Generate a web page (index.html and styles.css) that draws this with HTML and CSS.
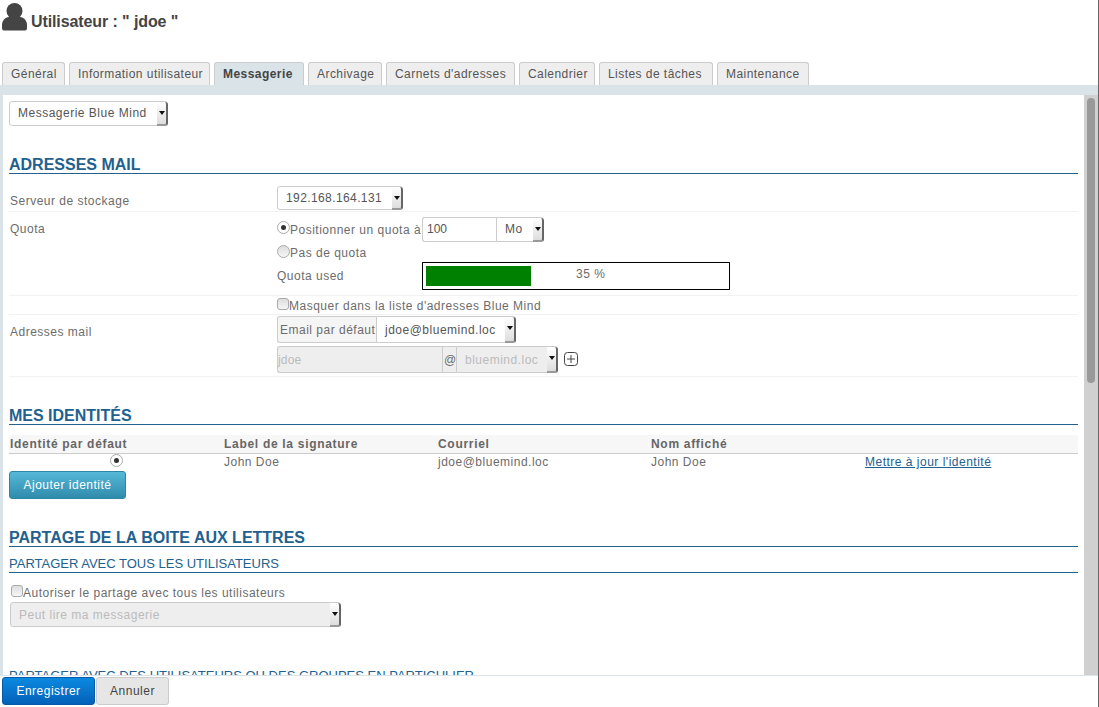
FILE: index.html
```html
<!DOCTYPE html>
<html lang="fr">
<head>
  <meta charset="UTF-8">
  <title>Utilisateur : jdoe</title>
  <link rel="stylesheet" href="styles.css">
</head>
<body>

  <!-- Title -->
  <header class="page-head">
    <svg class="user-icon" width="28" height="31" viewBox="0 0 28 31"><circle cx="12.500" cy="9" r="8" fill="#444"/><path d="M0 23c0-4 3-8 7-8h11c4 0 7 4 7 8v3c0 2-1 2.500-3 2.500H3c-2 0-3-.5-3-2.500z" fill="#444"/></svg>
    <h1>Utilisateur : " jdoe "</h1>
  </header>

  <!-- Tabs -->
  <ul class="tabs">
    <li>Général</li>
    <li>Information utilisateur</li>
    <li class="active">Messagerie</li>
    <li>Archivage</li>
    <li>Carnets d'adresses</li>
    <li>Calendrier</li>
    <li>Listes de tâches</li>
    <li>Maintenance</li>
  </ul>

  <div class="panel">
    <main class="content">
      <div class="select sel-type"><span class="sel-text">Messagerie Blue Mind</span><span class="arrow"></span></div>

      <h2 class="first">ADRESSES MAIL</h2>
      <div class="row row-server">
        <label class="row-label">Serveur de stockage</label>
        <div><div class="select sel-server"><span class="sel-text">192.168.164.131</span><span class="arrow"></span></div></div>
      </div>
      <div class="row row-quota">
        <label class="row-label">Quota</label>
        <div>
          <div class="line line-quota">
            <span class="radio checked"></span><span class="quota-text">Positionner un quota à</span>
            <div class="group group-quota">
              <span class="input input-quota">100</span>
              <div class="select sel-unit"><span class="sel-text">Mo</span><span class="arrow"></span></div>
            </div>
          </div>
          <div class="line line-none"><span class="radio"></span><span>Pas de quota</span></div>
          <div class="line line-used">
            <span class="used-label">Quota used</span>
            <div class="progress"><div class="progress-bar" style="width: 105px"></div><span class="progress-text">35 %</span></div>
          </div>
        </div>
      </div>
      <div class="row row-hide">
        <span class="row-label"></span>
        <div class="line"><span class="check"></span><span>Masquer dans la liste d'adresses Blue Mind</span></div>
      </div>
      <div class="row row-mail">
        <label class="row-label">Adresses mail</label>
        <div>
          <div class="group group-default">
            <span class="addon addon-default">Email par défaut</span>
            <div class="select sel-default"><span class="sel-text">jdoe@bluemind.loc</span><span class="arrow"></span></div>
          </div>
          <div class="line-add">
            <div class="group group-add">
              <span class="input input-login">jdoe</span>
              <span class="addon addon-at">@</span>
              <div class="select sel-domain"><span class="sel-text">bluemind.loc</span><span class="arrow"></span></div>
            </div>
            <svg class="plus" width="14" height="14" viewBox="0 0 14 14"><rect x=".5" y=".5" width="13" height="13" rx="3" fill="none" stroke="#444"/><path d="M3 7h8M7 3v8" stroke="#444" fill="none"/></svg>
          </div>
        </div>
      </div>

      <h2 class="identities">MES IDENTITÉS</h2>
      <table class="id-table">
        <thead>
          <tr><th>Identité par défaut</th><th>Label de la signature</th><th>Courriel</th><th>Nom affiché</th><th></th></tr>
        </thead>
        <tbody>
          <tr>
            <td class="cell-radio"><span class="radio checked"></span></td>
            <td>John Doe</td>
            <td>jdoe@bluemind.loc</td>
            <td>John Doe</td>
            <td><a href="#">Mettre à jour l'identité</a></td>
          </tr>
        </tbody>
      </table>
      <button class="btn btn-info">Ajouter identité</button>

      <h2 class="sharing">PARTAGE DE LA BOITE AUX LETTRES</h2>
      <h3>PARTAGER AVEC TOUS LES UTILISATEURS</h3>
      <div class="line line-share"><span class="check"></span><span>Autoriser le partage avec tous les utilisateurs</span></div>
      <div class="select sel-share"><span class="sel-text">Peut lire ma messagerie</span><span class="arrow"></span></div>
      <h3 class="share-some">PARTAGER AVEC DES UTILISATEURS OU DES GROUPES EN PARTICULIER</h3>
    </main>

    <!-- Scrollbar -->
    <div class="scrollbar"><div class="thumb"></div></div>
  </div>

  <!-- Actions -->
  <footer class="actions">
    <button class="btn btn-primary">Enregistrer</button>
    <button class="btn btn-cancel">Annuler</button>
  </footer>

</body>
</html>
```

FILE: styles.css
```css
* { box-sizing: border-box; }
html, body { height: 100%; }
body { display: flex; flex-direction: column; height: 707px; margin: 0; overflow: hidden; background-color: #fff; border-right: 1px solid #666; font-family: "Liberation Sans", Arial, sans-serif; font-size: 12px; letter-spacing: 0.5px; color: #6c6c6c; }

.page-head { display: flex; align-items: flex-start; height: 62px; padding: 2px 0 0 2px; flex: none; }
.user-icon { display: block; }
.page-head h1 { margin: 11px 0 0 1px; font-size: 16px; line-height: 18px; letter-spacing: -0.1px; font-weight: bold; color: #444; }

.tabs { display: flex; gap: 4px; height: 23px; flex: none; list-style: none; margin: 0; padding: 0 0 0 2px; letter-spacing: 0.45px; }
.tabs li { height: 23px; padding-left: 8px; line-height: 22px; white-space: nowrap; background-color: #eee; border: 1px solid #ccc; border-bottom: none; border-radius: 3px 3px 0 0; color: #555; }
.tabs li.active { background-color: #dae3e8; font-weight: bold; color: #444; }
.tabs li:nth-child(1) { width: 63px; }
.tabs li:nth-child(2) { width: 141px; }
.tabs li:nth-child(3) { width: 90px; }
.tabs li:nth-child(4) { width: 74px; }
.tabs li:nth-child(5) { width: 129px; }
.tabs li:nth-child(6) { width: 76px; }
.tabs li:nth-child(7) { width: 114px; }
.tabs li:nth-child(8) { width: 92px; }

.panel { display: flex; flex: 1; min-height: 0; border-top: 10px solid #dae3e8; border-left: 3px solid #dae3e8; }
.content { flex: 1; min-width: 0; overflow: hidden; padding: 6px 6px 0 6px; }
.scrollbar { width: 14px; flex: none; padding: 3px 3px 0; background-color: #d0d0d0; }
.thumb { height: 285px; background-color: #999; border-radius: 4px; }

h2 { margin: 0; height: 20px; font-size: 16px; line-height: 21px; letter-spacing: 0; color: #22618f; border-bottom: 1px solid #22618f; }
h2.first { margin-top: 28px; }
h2.identities { margin-top: 28px; }
h2.sharing { margin-top: 28px; }
h3 { margin: 8px 0 0; height: 18px; font-size: 13px; font-weight: normal; line-height: 17px; letter-spacing: 0; color: #22618f; border-bottom: 1px solid #22618f; }

.row { display: flex; border-bottom: 1px solid #f2f2f2; }
.row-label { width: 268px; flex: none; padding-left: 1px; }
.row-server { height: 38px; padding-top: 12px; }
.row-server .row-label { padding-top: 8px; }
.row-quota { height: 84px; }
.row-quota .row-label { padding-top: 10px; }
.row-hide { height: 19px; }
.row-mail { height: 62px; padding-top: 1px; }
.row-mail .row-label { padding-top: 9px; }

.line { display: flex; align-items: center; }
.line-quota { height: 30px; padding-top: 5px; }
.quota-text { width: 132px; white-space: nowrap; }
.line-none { height: 20px; padding-top: 2px; }
.line-used { height: 28px; }
.used-label { width: 145px; }
.row-hide .line { height: 18px; padding-top: 2px; }

.progress { display: flex; align-items: flex-start; width: 308px; height: 28px; padding: 3px; border: 1px solid #000; }
.progress-bar { height: 20px; flex: none; background-color: #008000; }
.progress-text { margin: 1px 0 0 45px; }

.radio { display: inline-block; flex: none; position: relative; width: 13px; height: 13px; margin-top: -4px; background: linear-gradient(#ddd, #f6f6f6); border: 1px solid #aaa; border-radius: 50%; }
.radio.checked { background: #fff; }
.radio.checked::after { content: ""; position: absolute; left: 3px; top: 3px; width: 5px; height: 5px; background-color: #333; border-radius: 50%; }
.check { display: inline-block; flex: none; width: 12px; height: 12px; margin-top: -4px; background: linear-gradient(#ddd, #f6f6f6); border: 1px solid #aaa; border-radius: 3px; }

.select { display: flex; justify-content: space-between; height: 25px; background-color: #fff; border: 1px solid #ccc; border-radius: 3px; color: #555; }
.sel-text { padding-left: 8px; line-height: 23px; white-space: nowrap; }
.arrow { position: relative; width: 11px; flex: none; margin: 0 -1px -1px 0; background: linear-gradient(#fff, #ddd); border-right: 2px solid #666; border-bottom: 2px solid #999; border-radius: 0 3px 3px 0; }
.arrow::after { content: ""; position: absolute; left: 2px; top: 9px; border-left: 3px solid transparent; border-right: 3px solid transparent; border-top: 4px solid #111; }

.sel-type { width: 159px; }
.sel-server { width: 126px; height: 24px; letter-spacing: 0.4px; }
.group { display: flex; }
.group-quota { height: 25px; width: 122px; }
.input { height: 100%; background-color: #fff; border: 1px solid #ccc; border-radius: 3px 0 0 3px; color: #555; line-height: 23px; padding-left: 4px; }
.input-quota { width: 74px; border-right: none; letter-spacing: 0; }
.sel-unit { width: 48px; border-radius: 0 3px 3px 0; }
.addon { height: 100%; padding: 0 2px; background-color: #f5f5f5; border: 1px solid #ccc; border-right: none; border-radius: 3px 0 0 3px; line-height: 27px; white-space: nowrap; }
.addon-default { width: 99px; }
.group-default { width: 239px; height: 27px; }
.group-default .select { flex: 1; height: 27px; border-radius: 0 3px 3px 0; }
.group-default .sel-text { line-height: 27px; }
.line-add { display: flex; align-items: center; margin-top: 3px; }
.group-add { width: 281px; height: 27px; }
.input-login { width: 165px; background-color: #eee; border-right: none; color: #bbb; padding-left: 0; line-height: 27px; letter-spacing: 0.2px; }
.addon-at { width: 14px; padding: 0 1px; border-radius: 0; border-left: 1px solid #ccc; background-color: #eee; }
.sel-domain { flex: 1; height: 27px; background-color: #eee; border-radius: 0 3px 3px 0; color: #bbb; }
.sel-domain .sel-text { line-height: 27px; }
.plus { display: block; margin: -1px 0 0 6px; }

.id-table { width: 1069px; margin-top: 10px; border-collapse: collapse; table-layout: fixed; }
.id-table th { height: 18px; padding: 0 1px; background-color: #f7f7f7; border-bottom: 1px solid #ccc; text-align: left; font-weight: bold; color: #666; letter-spacing: 0.7px; }
.id-table td { height: 18px; padding: 0 1px; }
.id-table th:nth-child(1) { width: 214px; }
.id-table th:nth-child(2) { width: 214px; }
.id-table th:nth-child(3) { width: 213px; }
.id-table th:nth-child(4) { width: 214px; }
.id-table .radio { display: block; margin: -4px 0 0 100px; }
.id-table a { color: #22618f; }

.btn { display: block; height: 28px; margin: 0; padding: 0; border-radius: 3px; font-family: inherit; font-size: 12px; letter-spacing: 0.5px; }
.btn-info { width: 117px; background: linear-gradient(#56b8d8, #2f8bab); border: 1px solid #2e86a5; color: #fff; }
.actions { display: flex; gap: 1px; height: 32px; flex: none; padding: 1px 0 0 2px; border-top: 1px solid #dae3e8; background-color: #fff; }
.btn-primary { width: 93px; background: linear-gradient(#0a8ae0, #0461b8); border: 1px solid #0559a8; color: #fff; }
.btn-cancel { width: 73px; background-color: #e6e6e6; border: 1px solid #ccc; color: #444; }

.line-share { height: 18px; margin-top: 10px; padding: 2px 0 0 2px; }
.sel-share { width: 331px; margin: 1px 0 0 1px; background-color: #eee; color: #bbb; }
.sel-share .sel-text { line-height: 25px; }
.share-some { margin-top: 40px; }
```
